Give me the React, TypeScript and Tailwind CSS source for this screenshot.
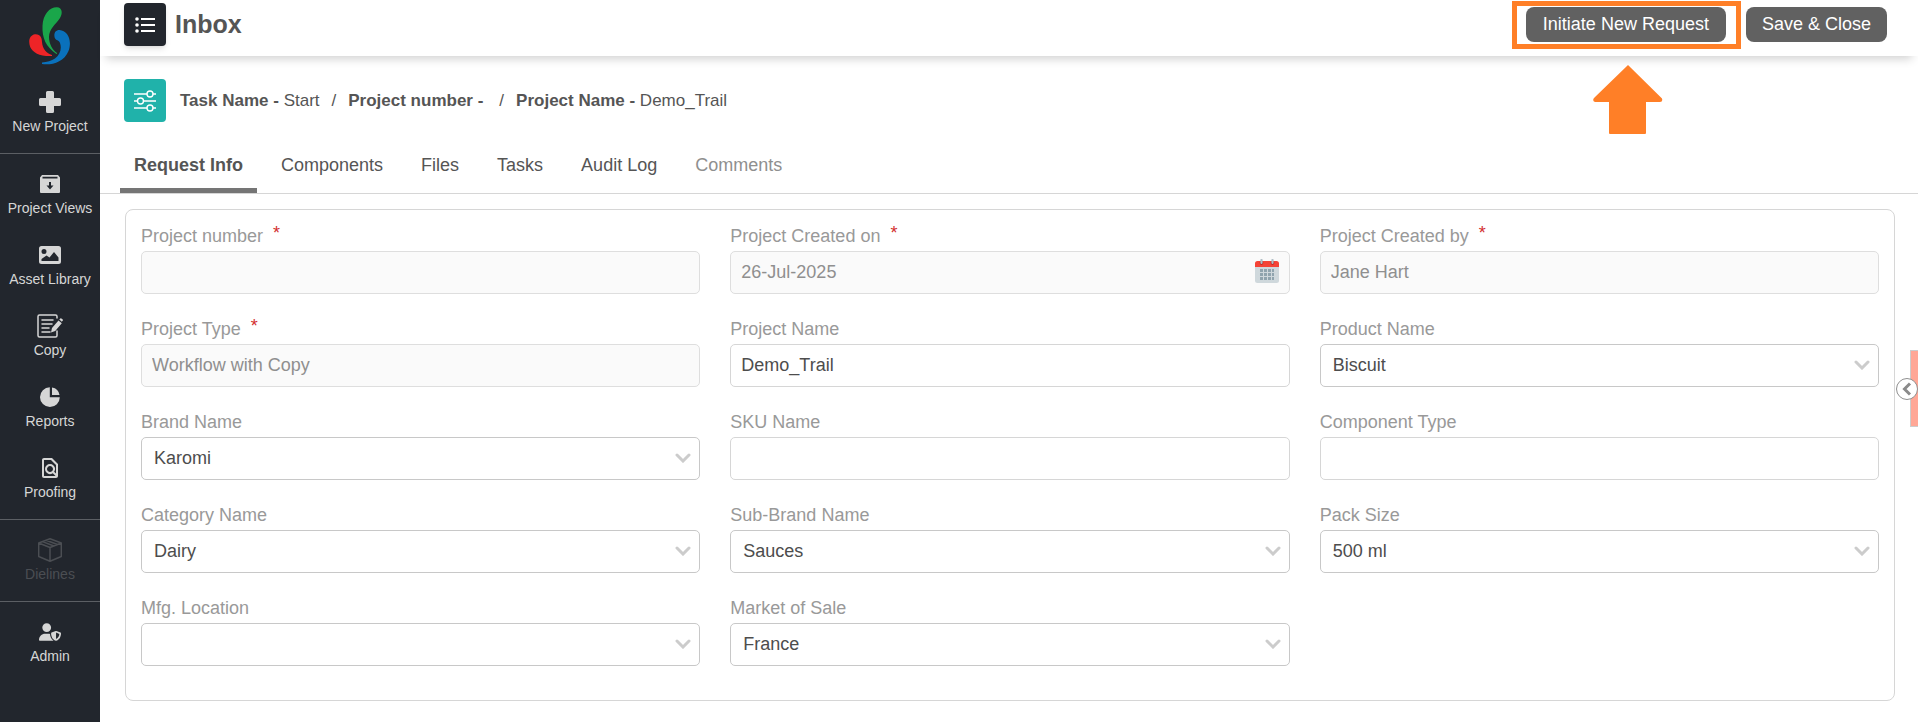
import React, { useState } from "react";
import type { ReactNode } from "react";
import { MdOutlineFindInPage } from "react-icons/md";
import { FaUserShield } from "react-icons/fa6";

const Logo = () => (
  <svg viewBox="0 0 42 58" className="w-[42px] h-[58px]" aria-hidden="true">
    <path
      fill="#1aa64a"
      d="M27.5 47C17 40 13 31 13.500 19C14 7 21 0 28 0.300C33 0.500 34 6 31 11C27 17 20 22 20 30C20 37 23.500 43 28 46C28 47 27.800 47.200 27.500 47Z"
    />
    <path
      fill="#ee2427"
      d="M23 49C11 49.500 4 46 1.200 40C-1 34 0.500 28 6 27.200C11.500 26.800 13 31 13 35C13.500 42 17.500 46.500 23 48Z"
    />
    <path
      fill="#0a71bc"
      d="M13 57C22 58.500 35 55.500 39.500 44C43.500 33 38.500 23.500 30.500 23C26 22.900 24.500 27 25.800 31C27 33.500 30 33 31 36C33 42 31 48 26 51.500C22.500 54 18 55 13 55.500Z"
    />
  </svg>
);

const ListIcon = () => (
  <svg viewBox="0 0 20 16" className="w-5 h-4" fill="currentColor" aria-hidden="true">
    <circle cx="2" cy="2" r="1.800" />
    <circle cx="2" cy="8" r="1.800" />
    <circle cx="2" cy="14" r="1.800" />
    <path d="M6 1h14v2H6zM6 7h14v2H6zM6 13h14v2H6z" />
  </svg>
);

const PlusIcon = () => (
  <svg viewBox="0 0 22 22" className="w-[22px] h-[22px]" fill="currentColor" aria-hidden="true">
    <path d="M8.500 0h5a1.500 1.500 0 0 1 1.500 1.500V7h5.500A1.500 1.500 0 0 1 22 8.500v5a1.500 1.500 0 0 1-1.500 1.500H15v5.500a1.500 1.500 0 0 1-1.500 1.500h-5A1.500 1.500 0 0 1 7 20.500V15H1.500A1.500 1.500 0 0 1 0 13.500v-5A1.500 1.500 0 0 1 1.500 7H7V1.500A1.500 1.500 0 0 1 8.500 0Z" />
  </svg>
);

const ArchiveIcon = () => (
  <svg viewBox="0 0 20 18" className="w-5 h-[18px]" fill="currentColor" aria-hidden="true">
    <path
      fillRule="evenodd"
      d="M2 0H18L20 2.500V17A1 1 0 0 1 19 18H1A1 1 0 0 1 0 17V2.500ZM2.500 1.800V3.600H17.500V1.800ZM9 7V10.500H6.500L10 14.500L13.500 10.500H11V7Z"
    />
  </svg>
);

const PictureIcon = () => (
  <svg viewBox="0 0 22 18" className="w-[22px] h-[18px]" fill="currentColor" aria-hidden="true">
    <path
      fillRule="evenodd"
      d="M2.500 0h17A2.500 2.500 0 0 1 22 2.500v13a2.500 2.500 0 0 1-2.500 2.500h-17A2.500 2.500 0 0 1 0 15.500v-13A2.500 2.500 0 0 1 2.500 0ZM5 3a2.500 2.500 0 1 0 0 5a2.500 2.500 0 0 0 0-5ZM2.500 15H19.500V11.500L15 6L10.500 11.500L7.500 9.500L2.500 13Z"
    />
  </svg>
);

const CopyIcon = () => (
  <svg viewBox="0 0 26 24" className="w-[26px] h-6" fill="none" stroke="currentColor" aria-hidden="true">
    <path
      strokeWidth="1.5"
      strokeLinecap="round"
      d="M20 4V2.500A1.500 1.500 0 0 0 18.500 1H2.500A1.500 1.500 0 0 0 1 2.500v19A1.500 1.500 0 0 0 2.500 23h16a1.500 1.500 0 0 0 1.500-1.500V17"
    />
    <path strokeWidth="1.500" strokeLinecap="round" d="M5 6h11M5 10h10M5 14h7M5 18h8" />
    <path
      fill="currentColor"
      stroke="none"
      d="M14 18.500l1-4.500l6.500-7.500l3.300 2.800l-6.600 7.600ZM22.300 5.600l1-1.100a.8.8 0 0 1 1.100-.1l1.300 1.100a.8.8 0 0 1 .1 1.100l-1 1.200Z"
    />
  </svg>
);

const PieIcon = () => (
  <svg viewBox="0 0 20 20" className="w-5 h-5" fill="currentColor" aria-hidden="true">
    <path d="M9.800 0.200V10.200H19.800A9.900 9.900 0 1 1 9.800 0.200Z" />
    <path d="M12 0.500A9 9 0 0 1 19.500 8H12Z" />
  </svg>
);

const BoxIcon = () => (
  <svg
    viewBox="0 0 24 24"
    className="w-6 h-6"
    fill="none"
    stroke="currentColor"
    strokeWidth="1.5"
    strokeLinejoin="round"
    aria-hidden="true"
  >
    <path d="M12 .8L23.300 5V18.500L12 23.300L.7 18.500V5ZM.7 5L12 9.500L23.300 5M12 9.500V23.300M4.500 3.600L16 8M8 2.300L19.500 6.500" />
  </svg>
);

const SlidersIcon = () => (
  <svg viewBox="0 0 22 22" className="w-[22px] h-[22px]" fill="none" stroke="#fff" strokeWidth="1.4" aria-hidden="true">
    <path d="M0 4H13M19 4H22M0 11H3.500M9.500 11H22M0 18H13M19 18H22" />
    <circle cx="16" cy="4" r="3" />
    <circle cx="6.500" cy="11" r="3" />
    <circle cx="16" cy="18" r="3" />
  </svg>
);

const CalendarIcon = () => (
  <svg viewBox="0 0 24 24" className="w-6 h-6" aria-hidden="true">
    <path fill="#cfd8dc" d="M0 7H24V21.500A2.500 2.500 0 0 1 21.500 24H2.500A2.500 2.500 0 0 1 0 21.500Z" />
    <path fill="#f44336" d="M0 8V4.500A2.500 2.500 0 0 1 2.500 2H21.500A2.500 2.500 0 0 1 24 4.500V8Z" />
    <path fill="none" stroke="#b71c1c" strokeWidth="3.500" strokeLinecap="round" d="M6.500 3.500V4M17.500 3.500V4" />
    <path fill="none" stroke="#b0bec5" strokeWidth="2.200" strokeLinecap="round" d="M6.500 1V4M17.500 1V4" />
    <path
      fill="#90a4ae"
      d="M5 10h3v3H5zM9 10h3v3H9zM13 10h3v3h-3zM17 10h2v3h-2zM5 14h3v3H5zM9 14h3v3H9zM13 14h3v3h-3zM17 14h2v3h-2zM5 18h3v3H5zM9 18h3v3H9zM13 18h3v3h-3zM17 18h2v3h-2z"
    />
  </svg>
);

type NavItem = { label: string; icon: ReactNode; disabled?: boolean };

const navGroups: NavItem[][] = [
  [{ label: "New Project", icon: <PlusIcon /> }],
  [
    { label: "Project Views", icon: <ArchiveIcon /> },
    { label: "Asset Library", icon: <PictureIcon /> },
    { label: "Copy", icon: <CopyIcon /> },
    { label: "Reports", icon: <PieIcon /> },
    { label: "Proofing", icon: <MdOutlineFindInPage size={24} /> },
  ],
  [{ label: "Dielines", icon: <BoxIcon />, disabled: true }],
  [{ label: "Admin", icon: <FaUserShield size={22} /> }],
];

const Sidebar = () => (
  <nav className="w-[100px] shrink-0 bg-[#22262d] text-[#d6d6d6]">
    <div className="h-[72px] flex items-center justify-center">
      <Logo />
    </div>
    {navGroups.map((group, i) => (
      <ul
        key={i}
        className="flex flex-col gap-[25px] pt-[18px] pb-[17px] border-b border-[#5c5f64] last:border-b-0"
      >
        {group.map((item) => (
          <li key={item.label}>
            <a
              href="#"
              aria-disabled={item.disabled}
              className={
                item.disabled
                  ? "flex flex-col items-center gap-[2px] text-[#4b4e53]"
                  : "flex flex-col items-center gap-[2px] hover:text-white"
              }
            >
              <span className="h-6 flex items-center justify-center">{item.icon}</span>
              <span className="text-sm leading-5 whitespace-nowrap">{item.label}</span>
            </a>
          </li>
        ))}
      </ul>
    ))}
  </nav>
);

const Header = () => (
  <header className="h-14 flex items-start justify-between pl-6 pr-[31px] bg-white shadow-[0_9px_9px_-6px_rgba(0,0,0,0.18)]">
    <div className="flex items-start gap-[9px] pt-[3px]">
      <button
        aria-label="Menu"
        className="w-[42px] h-[43px] flex items-center justify-center rounded bg-[#22262d] text-white shadow-md"
      >
        <ListIcon />
      </button>
      <h1 className="text-[25px] leading-[42px] font-bold text-[#555]">Inbox</h1>
    </div>
    <div className="flex gap-5 pt-[7px]">
      <div className="relative">
        <button className="h-[35px] px-[17px] pb-[2px] rounded-lg bg-[#616161] text-white text-lg leading-6">
          Initiate New Request
        </button>
        {/* Callout around the button */}
        <div className="absolute -left-[14px] -right-[15px] -top-[6px] -bottom-[7px] border-[5px] border-[#ff7f27] pointer-events-none" />
        <svg
          viewBox="0 0 70 70"
          className="absolute top-[58px] left-[67px] w-[70px] h-[70px]"
          fill="#ff7f27"
          aria-hidden="true"
        >
          <path d="M35 0L69 33.500Q70 37 67 37H53V68Q53 69 52 69H17Q16 69 16 68V37H2Q-1 36 1 33Z" />
        </svg>
      </div>
      <button className="h-[35px] px-4 pb-[2px] rounded-lg bg-[#616161] text-white text-lg leading-6">
        Save &amp; Close
      </button>
    </div>
  </header>
);

const Breadcrumb = () => (
  <div className="flex items-center gap-[14px] pl-6 pt-[23px]">
    <div className="w-[42px] h-[43px] flex items-center justify-center rounded bg-[#20b2aa]">
      <SlidersIcon />
    </div>
    <p className="flex gap-3 text-[17px] leading-6 text-[#555]">
      <span>
        <b>Task Name -</b> Start
      </span>
      <span>/</span>
      <b>Project number -</b>
      <span className="pl-1">/</span>
      <span>
        <b>Project Name -</b> Demo_Trail
      </span>
    </p>
  </div>
);

const tabs = ["Request Info", "Components", "Files", "Tasks", "Audit Log", "Comments"];

const Tabs = () => {
  const [active, setActive] = useState("Request Info");

  return (
    <div role="tablist" className="flex gap-[10px] mt-[18px] pl-5 border-b border-[#d6d6d6]">
      {tabs.map((tab) => (
        <button
          key={tab}
          role="tab"
          aria-selected={tab === active}
          onClick={() => setActive(tab)}
          className={
            tab === active
              ? "h-[53px] px-[14px] pt-[2px] border-b-[5px] border-[#757575] text-lg leading-6 font-bold text-[#555]"
              : tab === "Comments"
                ? "h-[53px] px-[14px] pt-[2px] border-b-[5px] border-transparent text-lg leading-6 text-[#8f8f8f]"
                : "h-[53px] px-[14px] pt-[2px] border-b-[5px] border-transparent text-lg leading-6 text-[#555]"
          }
        >
          {tab}
        </button>
      ))}
    </div>
  );
};

type FieldProps = {
  id: string;
  label: string;
  kind: "text" | "date" | "select";
  value?: string;
  required?: boolean;
  disabled?: boolean;
};

const fields: FieldProps[] = [
  { id: "project-number", label: "Project number", kind: "text", required: true, disabled: true },
  { id: "created-on", label: "Project Created on", kind: "date", value: "26-Jul-2025", required: true, disabled: true },
  { id: "created-by", label: "Project Created by", kind: "text", value: "Jane Hart", required: true, disabled: true },
  { id: "project-type", label: "Project Type", kind: "text", value: "Workflow with Copy", required: true, disabled: true },
  { id: "project-name", label: "Project Name", kind: "text", value: "Demo_Trail" },
  { id: "product-name", label: "Product Name", kind: "select", value: "Biscuit" },
  { id: "brand-name", label: "Brand Name", kind: "select", value: "Karomi" },
  { id: "sku-name", label: "SKU Name", kind: "text" },
  { id: "component-type", label: "Component Type", kind: "text" },
  { id: "category-name", label: "Category Name", kind: "select", value: "Dairy" },
  { id: "sub-brand-name", label: "Sub-Brand Name", kind: "select", value: "Sauces" },
  { id: "pack-size", label: "Pack Size", kind: "select", value: "500 ml" },
  { id: "mfg-location", label: "Mfg. Location", kind: "select" },
  { id: "market-of-sale", label: "Market of Sale", kind: "select", value: "France" },
];

const Field = ({ id, label, kind, value = "", required, disabled }: FieldProps) => (
  <div>
    <label htmlFor={id} className="flex gap-[10px] pb-[3px] text-lg leading-6 text-[#999]">
      {label}
      {required && <span className="h-6 leading-[18px] text-[#d32f2f]">*</span>}
    </label>
    <div className="relative">
      {kind === "select" ? (
        <>
          <select
            id={id}
            defaultValue={value}
            className="appearance-none w-full h-[43px] pl-3 pr-8 pb-[2px] border border-[#c8c8c8] rounded-[5px] bg-white text-lg text-[#4d4d4d]"
          >
            <option value={value}>{value}</option>
          </select>
          <svg
            viewBox="0 0 16 10"
            className="absolute right-[9px] top-4 w-4 h-[10px] pointer-events-none"
            fill="none"
            stroke="#ccc"
            strokeWidth="3"
            strokeLinecap="round"
            aria-hidden="true"
          >
            <path d="M2 2L8 8L14 2" />
          </svg>
        </>
      ) : (
        <input
          id={id}
          type="text"
          defaultValue={value}
          disabled={disabled}
          className="w-full h-[43px] px-[10px] border border-[#d6d6d6] rounded-[5px] bg-white text-lg text-[#4d4d4d] disabled:bg-[#fafafa] disabled:border-[#dedede] disabled:text-[#8f8f8f]"
        />
      )}
      {kind === "date" && (
        <span className="absolute right-[11px] top-2">
          <CalendarIcon />
        </span>
      )}
    </div>
  </div>
);

const App = () => {
  return (
    <div className="flex min-h-screen bg-white font-['Liberation_Sans',Arial,sans-serif]">
      <Sidebar />
      <main className="relative flex-1 min-w-0">
        <Header />
        <Breadcrumb />
        <Tabs />
        <form className="grid grid-cols-3 gap-x-[30px] gap-y-[23px] ml-[25px] mr-[23px] mt-[15px] px-[15px] pt-[14px] pb-[34px] border border-[#d6d6d6] rounded-lg">
          {fields.map((field) => (
            <Field key={field.id} {...field} />
          ))}
        </form>

        {/* Side panel handle */}
        <div className="absolute right-0 top-[350px] h-[77px] w-[22px] flex items-center">
          <div className="absolute right-0 inset-y-0 w-2 bg-[#ffa796] border border-r-0 border-[#ccc]" />
          <button
            aria-label="Open side panel"
            className="relative w-[22px] h-[22px] flex items-center justify-center rounded-full bg-white border border-[#8f8f8f]"
          >
            <svg
              viewBox="0 0 10 14"
              className="w-[10px] h-[14px]"
              fill="none"
              stroke="#8a8a8a"
              strokeWidth="3"
              aria-hidden="true"
            >
              <path d="M8 1.500L2.500 7L8 12.500" />
            </svg>
          </button>
        </div>
      </main>
    </div>
  );
};

export default App;
